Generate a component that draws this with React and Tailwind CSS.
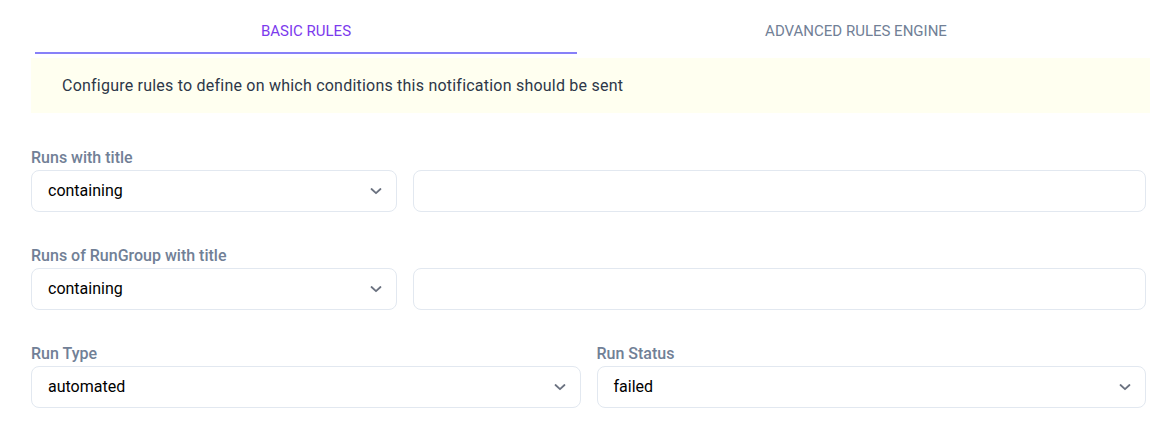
import React, { useState } from 'react';

const Chevron = () => (
  <svg width="12" height="12" viewBox="0 0 12 12" fill="none" className="shrink-0">
    <path d="M1.5 4L6 8.2L10.5 4" stroke="#6b7280" strokeWidth="1.8" strokeLinecap="round" strokeLinejoin="round" />
  </svg>
);

const SelectBox = ({ value, className = '' }) => (
  <div
    className={
      'h-[42px] flex items-center justify-between pl-4 pr-[14px] bg-white border border-[#e2e8f0] rounded-lg text-base text-black ' +
      className
    }
  >
    <span>{value}</span>
    <Chevron />
  </div>
);

const Label = ({ children }) => (
  <p className="h-6 leading-6 text-base font-medium text-[#718096]">{children}</p>
);

const App = () => {
  const [tab, setTab] = useState(0);

  return (
    <div className="w-[1150px] h-[431px] bg-white overflow-hidden" style={{ fontFamily: 'Roboto, "Liberation Sans", sans-serif' }}>
      <div className="pl-[31px] pr-[4px]">
        {/* Tabs */}
        <div className="flex pl-1 pr-[11px]">
          {['Basic Rules', 'Advanced Rules Engine'].map((t, i) => (
            <button
              key={t}
              onClick={() => setTab(i)}
              className={
                'w-[542px] first:w-[542px] last:flex-1 pt-[19px] pb-[9px] text-[15px] leading-6 uppercase border-b-2 ' +
                (tab === i ? 'text-[#7c3aed] border-[#8780f8]' : 'text-[#718096] border-transparent')
              }
            >
              {t}
            </button>
          ))}
        </div>

        {/* Info banner */}
        <div className="mt-1 -mr-1 h-[55px] flex items-center pl-[31px] pt-px bg-[#fffff0] text-base tracking-[0.22px] text-[#2d3748]">
          Configure rules to define on which conditions this notification should be sent
        </div>

        {/* Rules */}
        <div className="mt-[33px] w-[1115px] flex flex-col gap-8">
          <div>
            <Label>Runs with title</Label>
            <div className="flex gap-4">
              <SelectBox value="containing" className="w-[366px]" />
              <input className="flex-1 h-[42px] border border-[#e2e8f0] rounded-lg px-4 outline-none" />
            </div>
          </div>

          <div>
            <Label>Runs of RunGroup with title</Label>
            <div className="flex gap-4">
              <SelectBox value="containing" className="w-[366px]" />
              <input className="flex-1 h-[42px] border border-[#e2e8f0] rounded-lg px-4 outline-none" />
            </div>
          </div>

          <div className="grid grid-cols-2 gap-4">
            <div>
              <Label>Run Type</Label>
              <SelectBox value="automated" />
            </div>
            <div>
              <Label>Run Status</Label>
              <SelectBox value="failed" />
            </div>
          </div>
        </div>
      </div>
    </div>
  );
};

export default App;
